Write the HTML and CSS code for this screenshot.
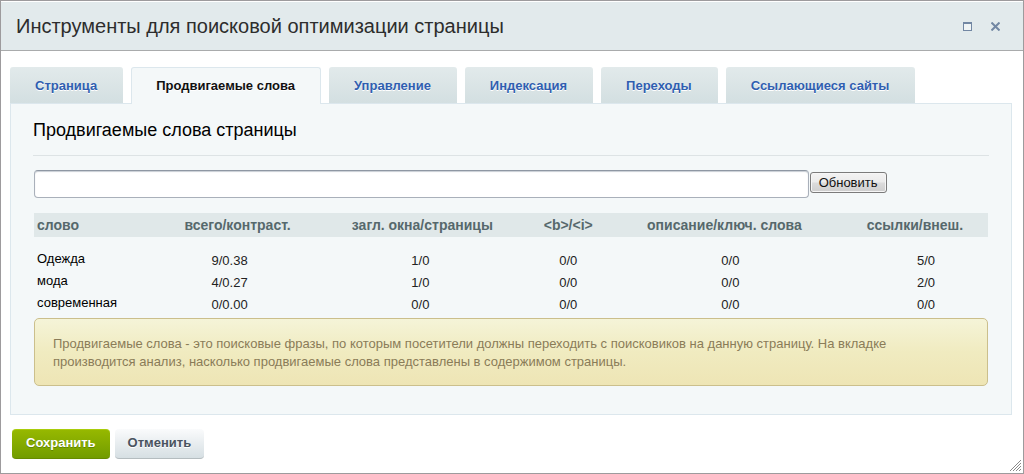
FILE: index.html
```
<!DOCTYPE html>
<html lang="ru">
<head>
    <meta charset="UTF-8">
    <meta name="viewport" content="width=device-width, initial-scale=1.0">
    <title>Инструменты для поисковой оптимизации страницы</title>
    <link rel="stylesheet" href="styles.css">
</head>
<body>
    <div class="dialog">
        <div class="dialog-head">
            <h1>Инструменты для поисковой оптимизации страницы</h1>
            <div class="dialog-controls">
                <button type="button" aria-label="Развернуть">
                    <svg width="9" height="9" viewBox="0 0 9 9" shape-rendering="crispEdges">
                        <path d="M0 0h9v9H0z" fill="#7287a3"/>
                        <path d="M1 2h7v6H1z" fill="#eff4f5"/>
                    </svg>
                </button>
                <button type="button" aria-label="Закрыть">
                    <svg width="9" height="9" viewBox="0 0 9 9">
                        <path d="M0.5 0.5l8 8M8.5 0.5l-8 8" stroke="#7287a3" stroke-width="2"/>
                    </svg>
                </button>
            </div>
        </div>

        <form class="dialog-body">
            <div class="tabs">
                <a class="tab" href="#page">Страница</a>
                <a class="tab active" href="#words">Продвигаемые слова</a>
                <a class="tab" href="#manage">Управление</a>
                <a class="tab" href="#index">Индексация</a>
                <a class="tab" href="#refs">Переходы</a>
                <a class="tab" href="#sites">Ссылающиеся сайты</a>
            </div>

            <div class="panel" id="words">
                <h2>Продвигаемые слова страницы</h2>
                <div class="panel-content">
                    <div class="search">
                        <input type="text" aria-label="Продвигаемые слова">
                        <button type="button">Обновить</button>
                    </div>

                    <table class="words">
                        <thead>
                            <tr>
                                <th class="col-word">слово</th>
                                <th class="col-total">всего/контраст.</th>
                                <th class="col-title">загл. окна/страницы</th>
                                <th class="col-bold">&lt;b&gt;/&lt;i&gt;</th>
                                <th class="col-desc">описание/ключ. слова</th>
                                <th class="col-links">ссылки/внеш.</th>
                            </tr>
                        </thead>
                        <tbody>
                            <tr><td>Одежда</td><td>9/0.38</td><td>1/0</td><td>0/0</td><td>0/0</td><td>5/0</td></tr>
                            <tr><td>мода</td><td>4/0.27</td><td>1/0</td><td>0/0</td><td>0/0</td><td>2/0</td></tr>
                            <tr><td>современная</td><td>0/0.00</td><td>0/0</td><td>0/0</td><td>0/0</td><td>0/0</td></tr>
                        </tbody>
                    </table>

                    <p class="note">Продвигаемые слова - это поисковые фразы, по которым посетители должны переходить с поисковиков на данную страницу. На вкладке производится анализ, насколько продвигаемые слова представлены в содержимом страницы.</p>
                </div>
            </div>

            <div class="buttons">
                <button type="submit" class="btn btn-save">Сохранить</button>
                <button type="button" class="btn">Отменить</button>
            </div>
        </form>

        <svg class="resizer" width="11" height="11" viewBox="0 0 11 11">
            <path d="M0 11L11 0M3 11l8-8M6 11l5-5M9 11l2-2" stroke="#8a8a8a"/>
        </svg>
    </div>
</body>
</html>
```
FILE: styles.css
```
* {
    box-sizing: border-box;
}

body {
    margin: 0;
    font-family: "Liberation Sans", Arial, sans-serif;
    font-size: 13px;
    color: #000;
    background: #fff;
}

button,
input {
    font-family: inherit;
}

.dialog {
    position: relative;
    min-height: 100vh;
    border: 1px solid #9d9b9d;
    background: #fff;
}

/* Заголовок окна */
.dialog-head {
    display: flex;
    align-items: center;
    justify-content: space-between;
    height: 50px;
    padding: 0 18px 0 15px;
    background: #e2eaec;
    border-top: 1px solid #fff;
    border-bottom: 1px solid #a9abac;
}

.dialog-head h1 {
    margin: 0;
    font-size: 20px;
    font-weight: normal;
    color: #2d2d2d;
}

.dialog-controls {
    display: flex;
    gap: 9px;
}

.dialog-controls button {
    display: flex;
    padding: 5px;
    border: 0;
    background: none;
    cursor: pointer;
}

.dialog-body {
    padding: 16px 11px 14px 9px;
}

/* Вкладки */
.tabs {
    display: flex;
    gap: 8px;
}

.tab {
    height: 36px;
    padding: 0 26px 0 25px;
    line-height: 37px;
    font-size: 13px;
    font-weight: bold;
    color: #2f5eb0;
    text-decoration: none;
    text-shadow: 0 1px 0 #fff;
    background: linear-gradient(#e2eaeb, #d3dfe1);
    border-radius: 3px 3px 0 0;
}

.tab.active {
    height: 37px;
    margin-bottom: -1px;
    padding: 0 25px 0 24px;
    line-height: 35px;
    color: #111;
    background: #f4f8f9;
    border: 1px solid #dce7ed;
    border-bottom: 0;
    z-index: 1;
}

.panel {
    padding: 16px 22px 28px;
    background: #f4f8f9;
    border: 1px solid #dce7ed;
}

.panel h2 {
    margin: 0 0 14px;
    padding-bottom: 15px;
    line-height: 20px;
    font-size: 18px;
    font-weight: normal;
    border-bottom: 1px solid #dde3e5;
}

.panel-content {
    padding: 0 1px;
}

.search {
    display: flex;
    gap: 1px;
    align-items: flex-start;
    margin-bottom: 15px;
}

.search input {
    width: 81.2%;
    height: 28px;
    padding: 0 6px;
    font-size: 13px;
    background: #fff;
    border: 1px solid #a9b0ba;
    border-top-color: #8e97a3;
    border-radius: 4px;
    box-shadow: inset 0 1px 1px #c8ced4;
}

.search button {
    height: 21px;
    margin-top: 2px;
    padding: 0 8px;
    font-size: 13px;
    color: #111;
    background: linear-gradient(#f3f3f3 0%, #ebebeb 48%, #dcdcdc 52%, #cecece 100%);
    border: 1px solid #7b7b7b;
    border-radius: 3px;
    box-shadow: inset 0 0 0 1px #f6f6f6;
}

/* Таблица слов */
.words {
    width: 100%;
    margin-bottom: 3px;
    table-layout: fixed;
    border-collapse: collapse;
}

.words th {
    height: 24px;
    padding: 0;
    font-size: 14px;
    color: #56686c;
    background: #e0e8e9;
    white-space: nowrap;
}

.words td {
    height: 22px;
    padding: 2px 0 0;
    line-height: 20px;
    text-align: center;
    color: #222;
}

.words td:first-child {
    padding: 0 3px 2px;
    text-align: left;
    color: #000;
}

.words tbody tr:first-child td {
    height: 34px;
    padding-top: 14px;
}

.words tbody tr:first-child td:first-child {
    padding-top: 12px;
}

.words .col-word {
    width: 13%;
    padding-left: 3px;
    text-align: left;
}

.words .col-total {
    width: 15%;
    padding-left: 16px;
}

.words .col-title {
    width: 25%;
    padding-left: 4px;
}

.words .col-bold {
    width: 6%;
}

.words .col-desc {
    width: 28%;
    padding-right: 12px;
}

.words .col-links {
    width: 13%;
    padding-right: 22px;
}

.note {
    margin: 0;
    padding: 16px 96px 14px 18px;
    line-height: 18px;
    font-size: 13px;
    color: #8a7c58;
    background: linear-gradient(#f5f4d8, #f0ebc0 50%, #eee5b5);
    border: 1px solid #cbbf8c;
    border-radius: 5px;
}

/* Кнопки */
.buttons {
    display: flex;
    gap: 5px;
    padding: 14px 2px 0;
}

.btn {
    height: 30px;
    padding: 0 13px 3px;
    font-size: 13px;
    font-weight: bold;
    color: #4a5360;
    text-shadow: 0 1px 0 #fff;
    background: linear-gradient(#fafbfc, #d6dfe3);
    border: 0;
    border-bottom: 1px solid #b4bcbf;
    border-radius: 4px;
    cursor: pointer;
}

.btn-save {
    padding: 0 14px 4px;
    color: #fff;
    text-shadow: 0 1px 0 #5f8400;
    background: linear-gradient(#96b800, #729c00);
    border-top: 1px solid #a9cc0c;
    border-bottom-color: #668a00;
}

.resizer {
    position: absolute;
    right: 2px;
    bottom: 2px;
}
```
